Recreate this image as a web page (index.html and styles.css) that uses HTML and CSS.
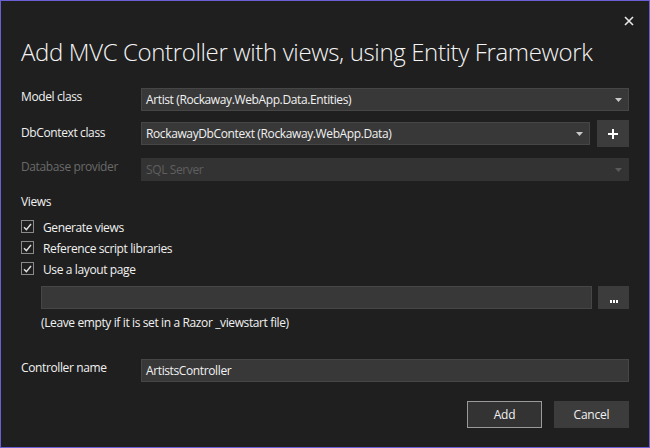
FILE: index.html
```html
<!DOCTYPE html>
<html lang="en">
<head>
<meta charset="utf-8">
<title>Add MVC Controller with views, using Entity Framework</title>
<link rel="stylesheet" href="styles.css">
</head>
<body>
<div class="dialog">
  <div class="titlebar">
    <button class="close" aria-label="Close">
      <svg width="10" height="10" viewBox="0 0 10 10"><path d="M1 1 L9 9 M9 1 L1 9" stroke="#e8e8e8" stroke-width="1.6" fill="none"/></svg>
    </button>
  </div>
  <h1 class="title">Add MVC Controller with views, using Entity Framework</h1>

  <div class="form">
    <div class="row row-model">
      <label class="label">Model class</label>
      <div class="combo"><span class="value">Artist (Rockaway.WebApp.Data.Entities)</span><svg class="arrow" width="7" height="4" viewBox="0 0 7 4"><path d="M0 0 H7 L3.5 4 Z" fill="#c8c8c8"/></svg></div>
    </div>
    <div class="row row-db">
      <label class="label label-db">DbContext class</label>
      <div class="combo-group">
        <div class="combo"><span class="value">RockawayDbContext (Rockaway.WebApp.Data)</span><svg class="arrow" width="7" height="4" viewBox="0 0 7 4"><path d="M0 0 H7 L3.5 4 Z" fill="#c8c8c8"/></svg></div>
        <button class="btn-icon btn-plus" aria-label="Add">
          <svg width="10" height="10" viewBox="0 0 10 10"><path d="M5 0 V10 M0 5 H10" stroke="#ffffff" stroke-width="2" fill="none"/></svg>
        </button>
      </div>
    </div>
    <div class="row row-provider disabled">
      <label class="label">Database provider</label>
      <div class="combo combo-disabled"><span class="value">SQL Server</span><svg class="arrow" width="7" height="4" viewBox="0 0 7 4"><path d="M0 0 H7 L3.5 4 Z" fill="#5a5a5a"/></svg></div>
    </div>
  </div>

  <div class="views">
    <div class="section-label">Views</div>
    <div class="checks">
      <label class="check"><span class="box"><svg width="9" height="8" viewBox="0 0 9 8"><path d="M1 4.2 L3.4 6.6 L8 1" stroke="#e0e0e0" stroke-width="1.4" fill="none"/></svg></span>Generate views</label>
      <label class="check"><span class="box"><svg width="9" height="8" viewBox="0 0 9 8"><path d="M1 4.2 L3.4 6.6 L8 1" stroke="#e0e0e0" stroke-width="1.4" fill="none"/></svg></span>Reference script libraries</label>
      <label class="check"><span class="box"><svg width="9" height="8" viewBox="0 0 9 8"><path d="M1 4.2 L3.4 6.6 L8 1" stroke="#e0e0e0" stroke-width="1.4" fill="none"/></svg></span>Use a layout page</label>
    </div>
    <div class="layout-row">
      <div class="input"></div>
      <button class="btn-icon btn-browse" aria-label="Browse">
        <span class="dots"><i></i><i></i><i></i></span>
      </button>
    </div>
    <div class="hint">(Leave empty if it is set in a Razor _viewstart file)</div>
  </div>

  <div class="row row-controller">
    <label class="label">Controller name</label>
    <div class="input text-input">ArtistsController</div>
  </div>

  <div class="actions">
    <button class="btn btn-primary">Add</button>
    <button class="btn">Cancel</button>
  </div>
</div>
</body>
</html>
```

FILE: styles.css
```css
* { box-sizing: border-box; }

html, body {
  margin: 0;
  padding: 0;
  background: #1f1f1f;
}

body {
  font-family: "Open Sans", "Noto Sans", sans-serif;
  font-size: 12px;
  line-height: 16px;
  letter-spacing: -0.38px;
  color: #f1f1f1;
}

.dialog {
  width: 650px;
  height: 448px;
  border: 1px solid #6b5fd6;
  background: #1f1f1f;
  padding: 0 20px;
  display: flex;
  flex-direction: column;
}

.titlebar {
  height: 35px;
  display: flex;
  justify-content: flex-end;
  align-items: flex-start;
  margin-right: -10px;
}

.close {
  width: 20px;
  height: 20px;
  margin-top: 10px;
  padding: 0;
  border: 0;
  background: transparent;
  display: flex;
  align-items: center;
  justify-content: center;
}

.title {
  margin: 0;
  font-weight: 300;
  font-size: 24px;
  line-height: 32px;
  letter-spacing: -0.36px;
  color: #f4f4f4;
  height: 32px;
  white-space: nowrap;
}

.form {
  margin-top: 20px;
  display: flex;
  flex-direction: column;
}

.row {
  display: grid;
  grid-template-columns: 120px 1fr;
  align-items: start;
}

.row-db { margin-top: 9px; }
.row-provider { margin-top: 11px; }

.label {
  color: #f1f1f1;
  white-space: nowrap;
  padding-top: 1px;
}

.label-db { margin-top: 4px; }

.disabled .label { color: #6a6a6a; }

.combo {
  height: 23px;
  background: #383838;
  border: 1px solid #464646;
  display: flex;
  align-items: center;
  justify-content: space-between;
  padding: 1px 6px 0 4px;
}

.combo .value { white-space: nowrap; }

.combo-disabled {
  background: #333333;
  border-color: #333333;
}

.combo-disabled .value { color: #5f5f5f; }

.combo-group {
  display: flex;
  align-items: center;
  gap: 7px;
}

.combo-group .combo { flex: 1; }

.btn-icon {
  border: 0;
  padding: 0;
  background: #3c3c3c;
  display: flex;
  align-items: center;
  justify-content: center;
  flex: none;
}

.btn-plus {
  width: 32px;
  height: 27px;
}

.views {
  margin-top: 13px;
  display: flex;
  flex-direction: column;
}

.section-label { color: #f1f1f1; }

.checks {
  margin-top: 10px;
  display: flex;
  flex-direction: column;
  gap: 5px;
}

.check {
  display: flex;
  align-items: flex-start;
  height: 16px;
}

.box {
  width: 13px;
  height: 13px;
  border: 1px solid #8a8a8a;
  margin: 0 9px 0 0;
  display: flex;
  align-items: center;
  justify-content: center;
}

.layout-row {
  margin-top: 8px;
  margin-left: 20px;
  display: flex;
  gap: 6px;
}

.input {
  height: 23px;
  background: #383838;
  border: 1px solid #464646;
}

.layout-row .input { flex: 1; }

.btn-browse {
  width: 31px;
  height: 23px;
  align-items: flex-end;
  padding-bottom: 6px;
}

.dots {
  display: flex;
  gap: 1px;
}

.dots i {
  display: block;
  width: 2px;
  height: 3px;
  background: #ffffff;
}

.hint {
  margin-top: 6px;
  margin-left: 20px;
  color: #f1f1f1;
}

.row-controller { margin-top: 28px; }

.text-input {
  display: flex;
  align-items: center;
  padding: 1px 4px 0 4px;
  color: #f1f1f1;
}

.actions {
  margin-top: 19px;
  display: flex;
  justify-content: flex-end;
  gap: 12px;
}

.btn {
  width: 75px;
  height: 27px;
  border: 1px solid #3c3c3c;
  background: #3c3c3c;
  color: #f1f1f1;
  font-family: inherit;
  font-size: 12px;
  letter-spacing: -0.2px;
  padding: 0;
}

.btn-primary {
  background: #333333;
  border-color: #9a9a9a;
}
```
